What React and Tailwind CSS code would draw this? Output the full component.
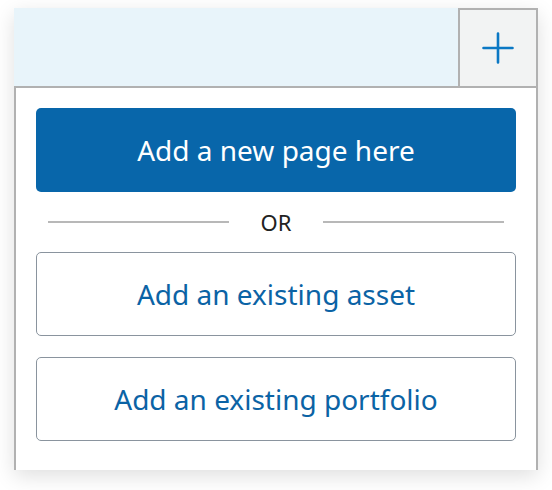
export default function App() {
  return (
    <div className="min-h-[490px] w-[552px] bg-white pt-[8px] pl-[14px]" style={{ fontFamily: '"Noto Sans", "Open Sans", sans-serif' }}>
      <div className="w-[524px] shadow-[0_6px_20px_rgba(0,0,0,0.13)]">
        <div className="flex h-[78px] bg-[#e8f4fa]">
          <div className="flex-1" />
          <div className="flex h-[78px] w-[80px] items-center justify-center border-x-2 border-t-2 border-[#b1b1b1] bg-[#f2f3f3]">
            <svg width="32" height="32" viewBox="0 0 32 32">
              <path d="M16 1.5V30.5M1.5 16H30.5" stroke="#0b78c4" strokeWidth="2.6" strokeLinecap="round" fill="none" />
            </svg>
          </div>
        </div>
        <div className="flex flex-col border-x-2 border-t-2 border-[#b1b1b1] bg-white px-[20px] pt-[20px] pb-[29px]">
          <button className="flex h-[84px] w-full items-center justify-center rounded-[5px] bg-[#0866aa] text-[28px] text-white">
            Add a new page here
          </button>
          <div className="mx-[12px] flex h-[60px] items-center gap-[32px]">
            <div className="h-[2px] flex-1 bg-[#b8b8b8]" />
            <span className="text-[22px] text-[#222222]">OR</span>
            <div className="h-[2px] flex-1 bg-[#b8b8b8]" />
          </div>
          <button className="flex h-[84px] w-full items-center justify-center rounded-[5px] border-[1.5px] border-[#8a949e] bg-white text-[28px] text-[#0b63a5]">
            Add an existing asset
          </button>
          <button className="mt-[21px] flex h-[84px] w-full items-center justify-center rounded-[5px] border-[1.5px] border-[#8a949e] bg-white text-[28px] text-[#0b63a5]">
            Add an existing portfolio
          </button>
        </div>
      </div>
    </div>
  );
}
